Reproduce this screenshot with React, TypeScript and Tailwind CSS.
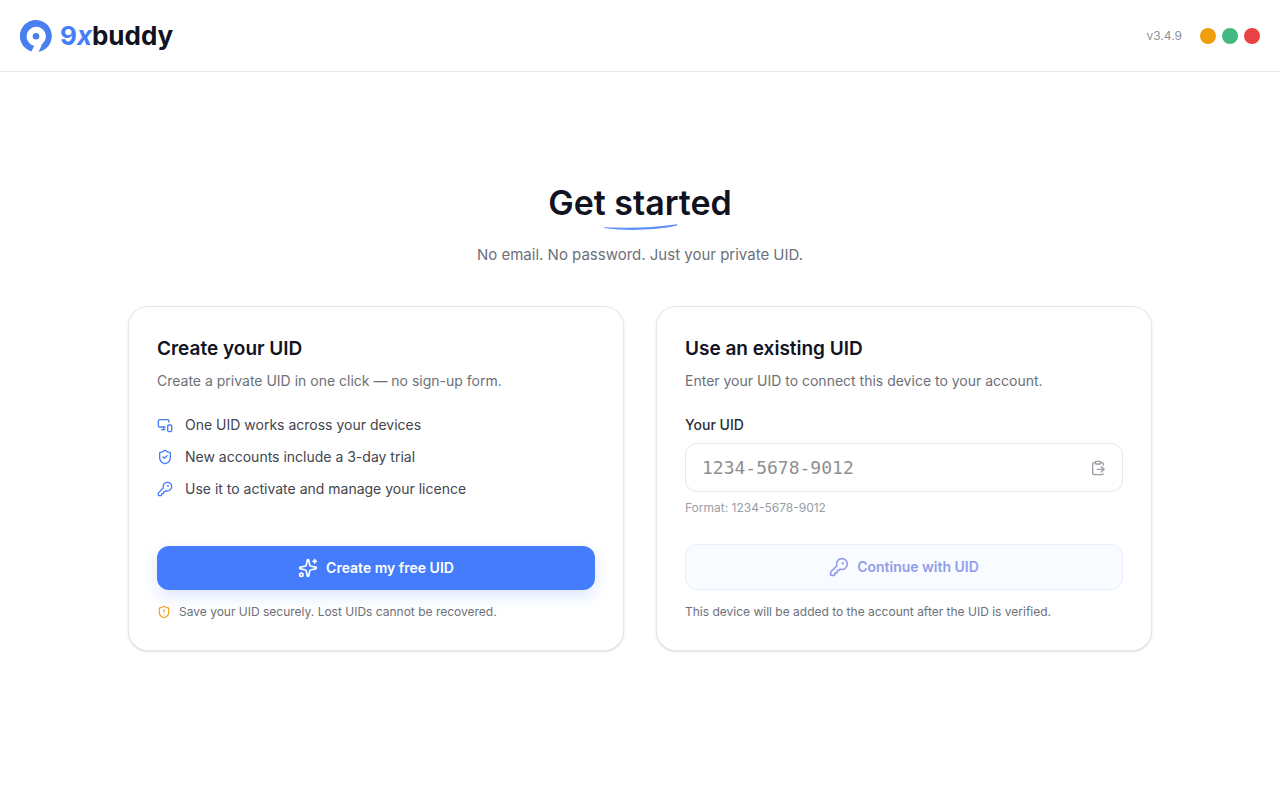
import { useState, type ReactNode } from "react";
import {
  ClipboardPaste,
  KeyRound,
  MonitorSmartphone,
  ShieldAlert,
  ShieldCheck,
  Sparkles,
  type LucideIcon,
} from "lucide-react";

interface Feature {
  icon: LucideIcon;
  text: string;
}

const FEATURES: Feature[] = [
  { icon: MonitorSmartphone, text: "One UID works across your devices" },
  { icon: ShieldCheck, text: "New accounts include a 3-day trial" },
  { icon: KeyRound, text: "Use it to activate and manage your licence" },
];

function Logo() {
  return (
    <div className="flex items-center gap-2">
      <svg width="32" height="32" viewBox="0 0 32 32" aria-hidden="true">
        {/* ring with a tail cut out of the bottom, like a 9 */}
        <path
          fill="#4a7ff0"
          d="M11.4 31.4A16 16 0 1 1 18.6 31.8C20 29.2 21 26.8 22 24.1A9.6 9.6 0 1 0 14.2 25.8Z"
        />
        <circle cx="16" cy="16.2" r="3.3" fill="#4a7ff0" />
      </svg>
      <span className="text-[26px] leading-8 font-bold text-[#111322]">
        <span className="text-[#447cfb]">
          9<i>x</i>
        </span>
        buddy
      </span>
    </div>
  );
}

function Header() {
  return (
    <header className="flex h-[72px] items-center justify-between border-b border-gray-200 px-5">
      <Logo />
      <div className="flex items-center gap-[18px]">
        <span className="text-xs text-[#8f929c]">v3.4.9</span>
        <div className="flex gap-1.5">
          <button type="button" aria-label="Minimize" className="size-4 rounded-full bg-[#f09f0c]" />
          <button type="button" aria-label="Maximize" className="size-4 rounded-full bg-[#42b883]" />
          <button type="button" aria-label="Close" className="size-4 rounded-full bg-[#e84244]" />
        </div>
      </div>
    </header>
  );
}

interface CardProps {
  title: string;
  subtitle: string;
  children: ReactNode;
}

function Card({ title, subtitle, children }: CardProps) {
  return (
    <section className="flex flex-col rounded-[20px] border border-[#e6e7ea] bg-white p-7 shadow-sm">
      <h2 className="text-[19px] leading-7 font-semibold text-[#111322]">{title}</h2>
      <p className="mt-2 text-sm leading-5 text-[#6d7079]">{subtitle}</p>
      {children}
    </section>
  );
}

function CreateCard() {
  return (
    <Card title="Create your UID" subtitle="Create a private UID in one click — no sign-up form.">
      <ul className="mt-6 space-y-3">
        {FEATURES.map(({ icon: Icon, text }) => (
          <li key={text} className="flex items-center gap-3 text-sm leading-5 text-[#42454e]">
            <Icon size={16} className="shrink-0 text-[#447cfb]" />
            {text}
          </li>
        ))}
      </ul>
      <div className="mt-auto">
        <button
          type="button"
          className="flex h-11 w-full items-center justify-center gap-2 rounded-xl bg-[#447cfb] text-sm font-semibold text-white shadow-[0_6px_16px_rgba(68,124,251,0.2)]"
        >
          <Sparkles size={20} />
          Create my free UID
        </button>
        <p className="mt-3 flex items-center gap-2 text-xs leading-5 text-[#6d7079]">
          <ShieldAlert size={14} className="shrink-0 text-[#f0a020]" />
          Save your UID securely. Lost UIDs cannot be recovered.
        </p>
      </div>
    </Card>
  );
}

function ExistingCard() {
  const [uid, setUid] = useState("");

  return (
    <Card
      title="Use an existing UID"
      subtitle="Enter your UID to connect this device to your account."
    >
      <form className="mt-6 flex grow flex-col" onSubmit={(e) => e.preventDefault()}>
        <label htmlFor="uid" className="text-sm leading-5 font-medium text-[#2b2e38]">
          Your UID
        </label>
        <div className="mt-2 flex h-[49px] items-center rounded-xl border border-[#e6e7ea] px-4">
          <input
            id="uid"
            value={uid}
            onChange={(e) => setUid(e.target.value)}
            placeholder="1234-5678-9012"
            className="min-w-0 grow font-['DejaVu_Sans_Mono',monospace] text-lg text-[#2b2e38] placeholder:text-[#8e8f92] focus:outline-none"
          />
          <button type="button" aria-label="Paste UID" className="text-[#9a9da6]">
            <ClipboardPaste size={16} />
          </button>
        </div>
        <p className="mt-2 text-xs leading-4 text-[#9a9da6]">Format: 1234-5678-9012</p>
        <div className="mt-7">
          <button
            type="submit"
            className="flex h-[46px] w-full items-center justify-center gap-2 rounded-xl border border-[#e8edfd] bg-[#f8fbff] text-sm font-semibold text-[#919de9]"
          >
            <KeyRound size={20} />
            Continue with UID
          </button>
          <p className="mt-3 text-xs leading-5 text-[#6d7079]">
            This device will be added to the account after the UID is verified.
          </p>
        </div>
      </form>
    </Card>
  );
}

export default function App() {
  return (
    <div className="min-h-screen bg-white font-['Inter',sans-serif]">
      <Header />
      <main className="mx-auto max-w-5xl pt-[111px] pb-8">
        <div className="flex flex-col items-center">
          <h1 className="relative text-[34px] leading-10 font-semibold text-[#111322]">
            Get started
            <svg
              className="absolute top-10 left-14"
              width="74"
              height="8"
              viewBox="0 0 74 8"
              aria-hidden="true"
            >
              <path d="M0 4.2C24 5.2 50 4.6 73 1.2C74 1.6 73 2.6 71 3.1C50 7.6 20 8 0 5Z" fill="#5e90f7" />
            </svg>
          </h1>
          <p className="mt-5 text-[15px] leading-6 text-[#6d7079]">
            No email. No password. Just your private UID.
          </p>
        </div>
        <div className="mt-[39px] grid grid-cols-2 gap-8">
          <CreateCard />
          <ExistingCard />
        </div>
      </main>
    </div>
  );
}
